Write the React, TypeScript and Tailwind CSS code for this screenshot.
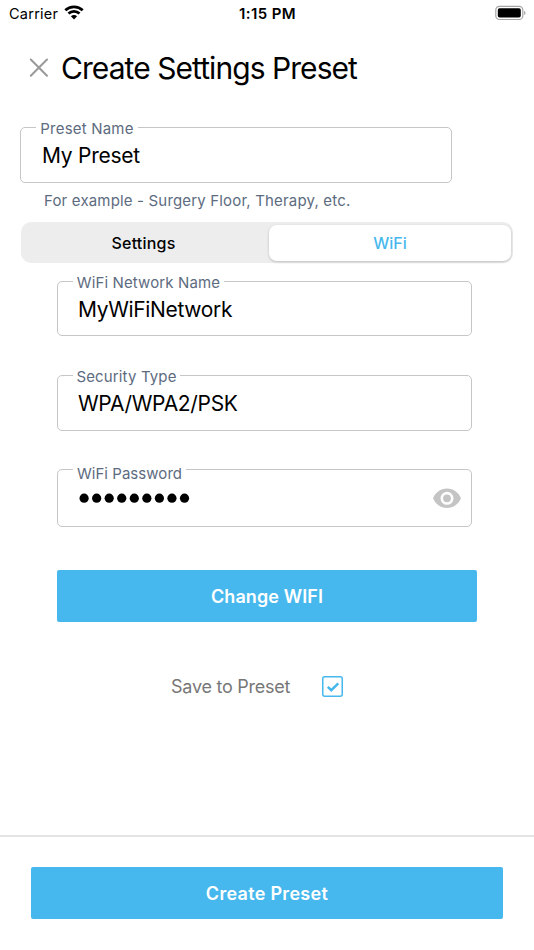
import type { ReactNode } from "react";

type FieldProps = {
  label: string;
  box: string;
  labelBox: string;
  labelText: string;
  children: ReactNode;
};

function Field({ label, box, labelBox, labelText, children }: FieldProps) {
  return (
    <div className={`relative rounded-[5px] border-[1.5px] border-[#c6c6c6] ${box}`}>
      <div className={`absolute left-[15px] flex h-5 items-center justify-center bg-white ${labelBox}`}>
        <span className={`whitespace-nowrap text-[15px] leading-5 text-[#5d6b80] ${labelText}`}>{label}</span>
      </div>
      {children}
    </div>
  );
}

function StatusBar() {
  return (
    <div className="grid h-7 grid-cols-3 items-center pl-[9px] pr-[8px]">
      <div className="flex items-center gap-[6px]">
        <span className="text-[14.5px] leading-7 tracking-[0.25px]">Carrier</span>
        <svg className="-mt-[3px]" width="20" height="15" viewBox="0 0 20 15" fill="none" stroke="#000" strokeWidth="2.8">
          <path d="M1.3 5.3C6.1.7 13.9.7 18.7 5.3" />
          <path d="M4.5 8.6c3.1-2.9 7.9-2.9 11 0" />
          <path d="M10 14.4 6.9 11.3c1.7-1.6 4.5-1.6 6.2 0Z" fill="#000" stroke="none" />
        </svg>
      </div>
      <span className="text-center text-[15px] font-semibold leading-7 tracking-[0.4px]">1:15 PM</span>
      <svg className="-mt-[2px] justify-self-end" width="31" height="16" viewBox="0 0 31 16">
        <rect x=".8" y="1.3" width="27" height="13.2" rx="3.6" fill="none" stroke="#a5a5a5" strokeWidth="1.2" />
        <rect x="2.8" y="3.2" width="23" height="9.4" rx="1.8" />
        <path d="M29.2 5.7c1.7.8 1.7 3.6 0 4.4Z" fill="#999" />
      </svg>
    </div>
  );
}

export default function App() {
  return (
    <main className="flex h-[950px] w-[534px] flex-col overflow-hidden bg-white font-['Inter',sans-serif] text-black">
      <StatusBar />
      <header className="mt-5 flex h-10 items-center pl-[29px]">
        <svg width="20" height="20" viewBox="0 0 20 20" fill="none" stroke="#999" strokeWidth="2" strokeLinecap="round">
          <path d="m1.8 1.5 16.2 16.2M18 1.5 1.8 17.700" />
        </svg>
        <h1 className="ml-3 whitespace-nowrap text-[30px] leading-10 tracking-[-0.94px]">Create Settings Preset</h1>
      </header>

      <section className="mt-[39px] h-[95px] pl-5">
        <Field label="Preset Name" box="h-14 w-[432px]" labelBox="-top-[9px] w-[102px]" labelText="tracking-[0.2px]">
          <div className="pl-[21px] pt-[14px] text-[21px] leading-7 tracking-[-0.25px]">My Preset</div>
        </Field>
        <p className="mt-2 whitespace-nowrap pl-6 text-[15px] leading-5 tracking-[0.17px] text-[#5d6b80]">
          For example - Surgery Floor, Therapy, etc.
        </p>
      </section>

      <div className="ml-[21px] flex h-[41px] w-[492px] items-center rounded-[10px] bg-[#ededed] text-base font-medium">
        <div className="w-[248px] pr-[3px] pt-px text-center leading-[41px] tracking-[0.2px]">Settings</div>
        <div className="h-9 w-[242px] rounded-[8px] bg-white text-center leading-9 text-[#47b8ed] shadow-[0_1px_3px_rgba(0,0,0,0.2)]">WiFi</div>
      </div>

      <section className="flex flex-col pl-[57px] pt-[18px]">
        <Field label="WiFi Network Name" box="h-[55px] w-[415px]" labelBox="-top-[9px] w-[151px]" labelText="tracking-[0.13px]">
          <div className="pl-5 pt-[14px] text-[21px] leading-7 tracking-[-0.34px]">MyWiFiNetwork</div>
        </Field>
        <Field label="Security Type" box="mt-[39px] h-[56px] w-[415px]" labelBox="-top-[9px] w-[107px]" labelText="tracking-[0.15px]">
          <div className="pl-5 pt-[14px] text-[21px] leading-7 tracking-[-0.32px]">WPA/WPA2/PSK</div>
        </Field>
        <Field label="WiFi Password" box="mt-[38px] h-[58px] w-[415px]" labelBox="-top-[6px] w-[113px]" labelText="tracking-[0.05px]">
          <div className="flex items-center justify-between pl-[21px] pr-[10px] pt-[14px]">
            <svg width="112" height="10" viewBox="0 0 112 10">
              {Array.from({ length: 9 }, (_, i) => (
                <circle key={i} cx={5.1 + i * 12.55} cy="5.2" r="4.6" />
              ))}
            </svg>
            <svg width="28" height="28" viewBox="0 0 28 28">
              <path
                fill="#c4c4c4"
                fillRule="evenodd"
                d="M14 4.6C7.700 4.600 2.300 8.600 0 14.300c2.300 5.700 7.700 9.700 14 9.700S25.700 20 28 14.300C25.700 8.600 20.300 4.600 14 4.600ZM14 20.800a6.500 6.500 0 1 1 0-13 6.500 6.500 0 0 1 0 13Zm0-10.400a3.900 3.900 0 1 0 0 7.800 3.900 3.900 0 0 0 0-7.800Z"
              />
            </svg>
          </div>
        </Field>
        <button className="mt-[43px] h-[52px] w-[420px] rounded-[2px] bg-[#47b8ed] pt-px text-[18px] font-semibold tracking-[0.1px] text-white">
          Change WIFI
        </button>
      </section>

      <div className="mt-[49px] flex h-[30px] items-center pl-[171px] text-[#777]">
        <span className="w-[151px] whitespace-nowrap text-[18px] tracking-[-0.25px]">Save to Preset</span>
        <svg width="21" height="21" viewBox="0 0 21 21" fill="none" stroke="#47b8ed">
          <rect x=".75" y=".75" width="19.5" height="19.5" rx="2" strokeWidth="1.5" />
          <path d="m5.8 10.8 3.500 3.400 7-6.900" strokeWidth="2.5" />
        </svg>
      </div>

      <footer className="mt-auto h-[115px] border-t-2 border-[#e4e4e4] pl-[31px] pt-[30px]">
        <button className="h-[52px] w-[472px] rounded-[2px] bg-[#47b8ed] text-[18px] font-semibold tracking-[0.3px] text-white">
          Create Preset
        </button>
      </footer>
    </main>
  );
}
